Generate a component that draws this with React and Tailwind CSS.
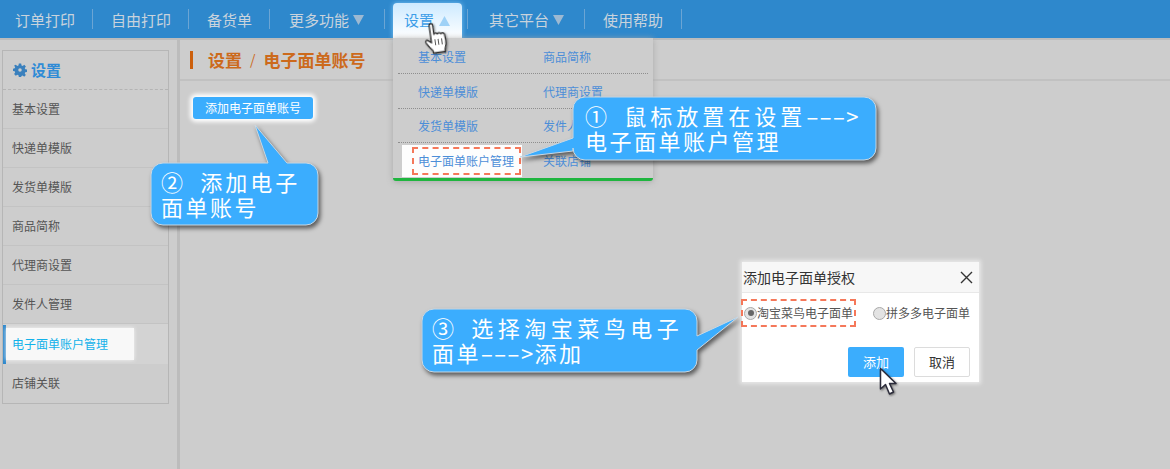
import React from "react";

const font = { fontFamily: '"Noto Sans CJK SC", "Liberation Sans", sans-serif' };

function NavText({ children, arrow }) {
  return (
    <span className="flex items-center text-[15px] text-[#c9d3dc] leading-none">
      {children}
      {arrow && (
        <svg width="11" height="10" viewBox="0 0 11 10" className="ml-[4px] mt-[1px]">
          <path d="M0 0H11L5.5 10Z" fill="#9db9d2" />
        </svg>
      )}
    </span>
  );
}

const Sep = ({ className }) => <div className={`w-px h-[20px] bg-[#6ba5d4] ${className}`} />;

function Nav() {
  return (
    <div className="h-[38px] shrink-0 bg-[#2e88cc] flex items-center pl-[15px] relative z-10">
      <NavText>订单打印</NavText>
      <Sep className="ml-[17px] mr-[18px]" />
      <NavText>自由打印</NavText>
      <Sep className="ml-[17px] mr-[18px]" />
      <NavText>备货单</NavText>
      <Sep className="ml-[17px] mr-[19px]" />
      <NavText arrow>更多功能</NavText>
      <Sep className="ml-[20px] mr-[8px]" />
      <div className="w-[69px] h-[35px] mt-[3px] rounded-t-[4px] bg-gradient-to-b from-[#cdeaff] to-white flex items-center pl-[11px] text-[15px] text-[#3d9ee8] shadow-[0_0_5px_#7cc4f5]">
        设置
        <svg width="11" height="10" viewBox="0 0 11 10" className="ml-[5px]">
          <path d="M0 10H11L5.5 0Z" fill="#9fd2f7" />
        </svg>
      </div>
      <Sep className="ml-[5px] mr-[21px]" />
      <NavText arrow>其它平台</NavText>
      <Sep className="ml-[20px] mr-[18px]" />
      <NavText>使用帮助</NavText>
      <Sep className="ml-[18px]" />
    </div>
  );
}

const sideItems = ["基本设置", "快递单模版", "发货单模版", "商品简称", "代理商设置", "发件人管理"];

function Sidebar() {
  return (
    <aside className="w-[167px] h-[354px] ml-[2px] mt-[10px] border border-[#b6b6b6] shrink-0 flex flex-col">
      <div className="h-[39px] flex items-center pl-[10px] border-b border-dashed border-[#b4b4b4] text-[15px] font-bold text-[#2f8bd6] shrink-0">
        <svg width="14" height="14" viewBox="0 0 24 24" className="mr-[4px]">
          <path
            fill="#3a80bd"
            fillRule="evenodd"
            d="M10 1h4l.6 3.200 2 .8L19.300 3.200l2.800 2.800-1.900 2.700.8 2 3 .6v4l-3 .6-.8 2 1.800 2.700-2.800 2.800-2.700-1.800-2 .8L14 24h-4l-.6-3.200-2-.8-2.700 1.800L1.900 19l1.800-2.700-.8-2L0 13.700v-4l2.900-.6.8-2L1.900 4.400 4.700 3.200 7.400 5l2-.8Zm2 8a3 3 0 1 0 0 6 3 3 0 0 0 0-6Z"
          />
        </svg>
        设置
      </div>
      {sideItems.map((t) => (
        <div key={t} className="h-[39px] shrink-0 flex items-center pl-[9px] text-[12px] text-[#555] border-b border-[#c3c3c3]">
          {t}
        </div>
      ))}
      <div className="h-[40px] shrink-0 bg-[#d3d3d3] flex items-center">
        <div className="w-[3px] h-[39px] bg-[#2e88cc]" />
        <div className="w-[128px] h-[32px] bg-[#f8f8f8] shadow-[0_0_4px_#f4f4f4] flex items-center pl-[6px] text-[12px] text-[#12b2ea]">
          电子面单账户管理
        </div>
      </div>
      <div className="h-[38px] shrink-0 flex items-center pl-[9px] text-[12px] text-[#555]">店铺关联</div>
    </aside>
  );
}

function Main() {
  return (
    <main className="flex-1 ml-[8px] border-l-[3px] border-[#bcbcbc] flex flex-col">
      <div className="h-[41px] border-b-2 border-[#c1c1c1] flex items-center pl-[10px] text-[17px] font-bold text-[#cc6a1c] shrink-0">
        <div className="w-[3px] h-[18px] bg-[#cc5f0c] mr-[15px]" />
        设置
        <span className="mx-[8px] font-normal text-[14px]">/</span>
        电子面单账号
      </div>
      <div className="flex pl-[13px] pt-[16px]">
        <button className="w-[120px] h-[22px] rounded-[3px] bg-[#3badfd] text-white text-[12px] leading-none shadow-[0_0_4px_3px_#ffffff]">
          添加电子面单账号
        </button>
      </div>
    </main>
  );
}

function MenuRow({ a, b }) {
  return (
    <div className="h-[35px] pt-[2px] border-b border-dotted border-[#8e8e8e] flex items-center text-[12px] text-[#4c8ed8] mx-[5px]">
      <span className="w-[145px] pl-[20px]">{a}</span>
      <span>{b}</span>
    </div>
  );
}

function Menu() {
  return (
    <div className="absolute left-[393px] top-[38px] w-[260px] h-[143px] bg-[#cdcdcd] border-b-[3px] border-[#1fb53f] rounded-b-[3px] shadow-[0_1px_6px_#a9a9a9] z-20 flex flex-col pt-[1px]">
      <MenuRow a="基本设置" b="商品简称" />
      <MenuRow a="快递单模版" b="代理商设置" />
      <MenuRow a="发货单模版" b="发件人管理" />
      <div className="h-[35px] flex items-center text-[12px] text-[#4c8ed8]">
        <span className="w-[150px] pl-[25px]">电子面单账户管理</span>
        <span>关联店铺</span>
      </div>
    </div>
  );
}

function Hand() {
  return (
    <svg width="26" height="33" viewBox="0 0 26 33" className="absolute left-[424px] top-[22px] z-50 -rotate-[8deg]">
      <path
        d="M7 2.500c0-2 3.500-2 3.500 0V12c.5-1.500 3.200-1.500 3.500 0 .5-1.300 3.200-1.300 3.500.3.700-1 3.200-.8 3.500 1l.5 6c.2 4-1 6.500-2 9.200v2H7.500v-2C6 25.500 3 23 1.500 19.500c-.8-2 1-3.200 2.500-2L7 20Z"
        fill="#fff"
        stroke="#2c2c2c"
        strokeWidth="1.300"
        strokeLinejoin="round"
        style={{ filter: "drop-shadow(1px 1px 1px rgba(0,0,0,.4))" }}
      />
      <path d="M10.800 17v6M14 17v6M17.500 17v6" stroke="#555" strokeWidth="1" />
    </svg>
  );
}

function Callout({ x, y, w, h, path, children, pad }) {
  return (
    <div className="absolute z-30" style={{ left: x, top: y, width: w, height: h }}>
      <svg width={w} height={h} className="absolute left-0 top-0 overflow-visible">
        <path
          d={path}
          fill="#3badfe"
          stroke="#c9d7e2"
          strokeWidth="1"
          style={{ filter: "drop-shadow(2px 3px 2px rgba(0,0,0,.55))" }}
        />
      </svg>
      <div className="relative text-white text-[22px] leading-[25px] tracking-[2.500px] whitespace-pre pt-[6px]" style={{ paddingLeft: pad }}>
        {children}
      </div>
    </div>
  );
}

const Wide = ({ children, className }) => <span className={className}>{children}</span>;

function Radio({ on }) {
  return (
    <span className="w-[13px] h-[13px] rounded-full border border-[#a9a9a9] bg-[#e3e3e3] flex items-center justify-center shrink-0">
      {on && <span className="w-[6px] h-[6px] rounded-full bg-[#666]" />}
    </span>
  );
}

function Dialog() {
  return (
    <div className="absolute left-[742px] top-[262px] w-[237px] h-[120px] bg-white shadow-[0_0_4px_2px_#e9e9e9] z-20 flex flex-col">
      <div className="h-[31px] bg-[#f7f7f7] border-b border-[#e8e8e8] flex items-center justify-between pl-[1px] pr-[6px] text-[14px] text-[#333] shrink-0">
        添加电子面单授权
        <svg width="13" height="13" viewBox="0 0 13 13">
          <path d="M1 1L12 12M12 1L1 12" stroke="#333" strokeWidth="1.400" />
        </svg>
      </div>
      <div className="h-[40px] flex items-center text-[12px] text-[#555] pl-[2px] shrink-0">
        <div className="relative flex items-center w-[129px]">
          <Radio on />
          <span>淘宝菜鸟电子面单</span>
          <div className="absolute left-[-3px] top-[-5px] w-[115px] h-[28px] border-2 border-dashed border-[#f5785a]" />
        </div>
        <Radio />
        <span>拼多多电子面单</span>
      </div>
      <div className="flex justify-end gap-[10px] pr-[9px] mt-[14px]">
        <div className="w-[56px] h-[30px] rounded-[2px] bg-[#3badfd] text-white text-[13px] flex items-center justify-center">添加</div>
        <div className="w-[56px] h-[30px] rounded-[2px] border border-[#dcdcdc] bg-white text-[#333] text-[13px] flex items-center justify-center">取消</div>
      </div>
    </div>
  );
}

export default function App() {
  return (
    <div className="w-[1170px] h-[469px] relative overflow-hidden bg-[#cdcdcd] flex flex-col" style={font}>
      <Nav />
      <div className="h-[2px] bg-[#bcbcbc] shrink-0" />
      <div className="flex flex-1">
        <Sidebar />
        <Main />
      </div>
      <Menu />
      {/* highlighted menu entry */}
      <div className="absolute left-[402px] top-[145px] w-[120px] h-[32px] bg-[#fdfdfd] z-20 flex items-center pl-[16px] text-[12px] text-[#4c8ed8]">
        电子面单账户管理
        <div className="absolute left-[10px] top-[2px] w-[109px] h-[28px] border-2 border-dashed border-[#f5785a]" />
      </div>
      <Hand />
      <Callout
        x={573}
        y={97}
        w={303}
        h={63}
        pad={12}
        path="M12 0H291a12 12 0 0 1 12 12V51a12 12 0 0 1-12 12H12a12 12 0 0 1-12-12V54L-53 60L0 41V12a12 12 0 0 1 12-12Z"
      >
        <div>
          ①  <Wide className="tracking-[4px]">鼠标放置在设置</Wide>
          <Wide className="tracking-[1.500px]">–––&gt;</Wide>
        </div>
        <div>电子面单账户管理</div>
      </Callout>
      <Callout
        x={151}
        y={163}
        w={167}
        h={62}
        pad={10}
        path="M12 0H117L104 -38L136 0H155a12 12 0 0 1 12 12V50a12 12 0 0 1-12 12H12a12 12 0 0 1-12-12V12a12 12 0 0 1 12-12Z"
      >
        <div>
          ②  <Wide className="tracking-[3px]">添加电子</Wide>
        </div>
        <div>面单账号</div>
      </Callout>
      <Callout
        x={422}
        y={309}
        w={275}
        h={63}
        pad={10}
        path="M12 0H263a12 12 0 0 1 12 12V27L316 8L275 41V51a12 12 0 0 1-12 12H12a12 12 0 0 1-12-12V12a12 12 0 0 1 12-12Z"
      >
        <div>
          ③  <Wide className="tracking-[4.500px]">选择淘宝菜鸟电子</Wide>
        </div>
        <div>
          面单<Wide className="tracking-[1.500px]">–––&gt;</Wide>添加
        </div>
      </Callout>
      <Dialog />
      <svg width="20" height="30" viewBox="0 0 20 30" className="absolute left-[879px] top-[367px] z-40">
        <path
          d="M1.500 1.500V22L6.500 17.500L10.500 27L14.500 25L10.500 16.500H17Z"
          fill="#fff"
          stroke="#2b2b3a"
          strokeWidth="1.500"
          strokeLinejoin="round"
          style={{ filter: "drop-shadow(1px 1px 1px rgba(0,0,0,.5))" }}
        />
      </svg>
    </div>
  );
}
